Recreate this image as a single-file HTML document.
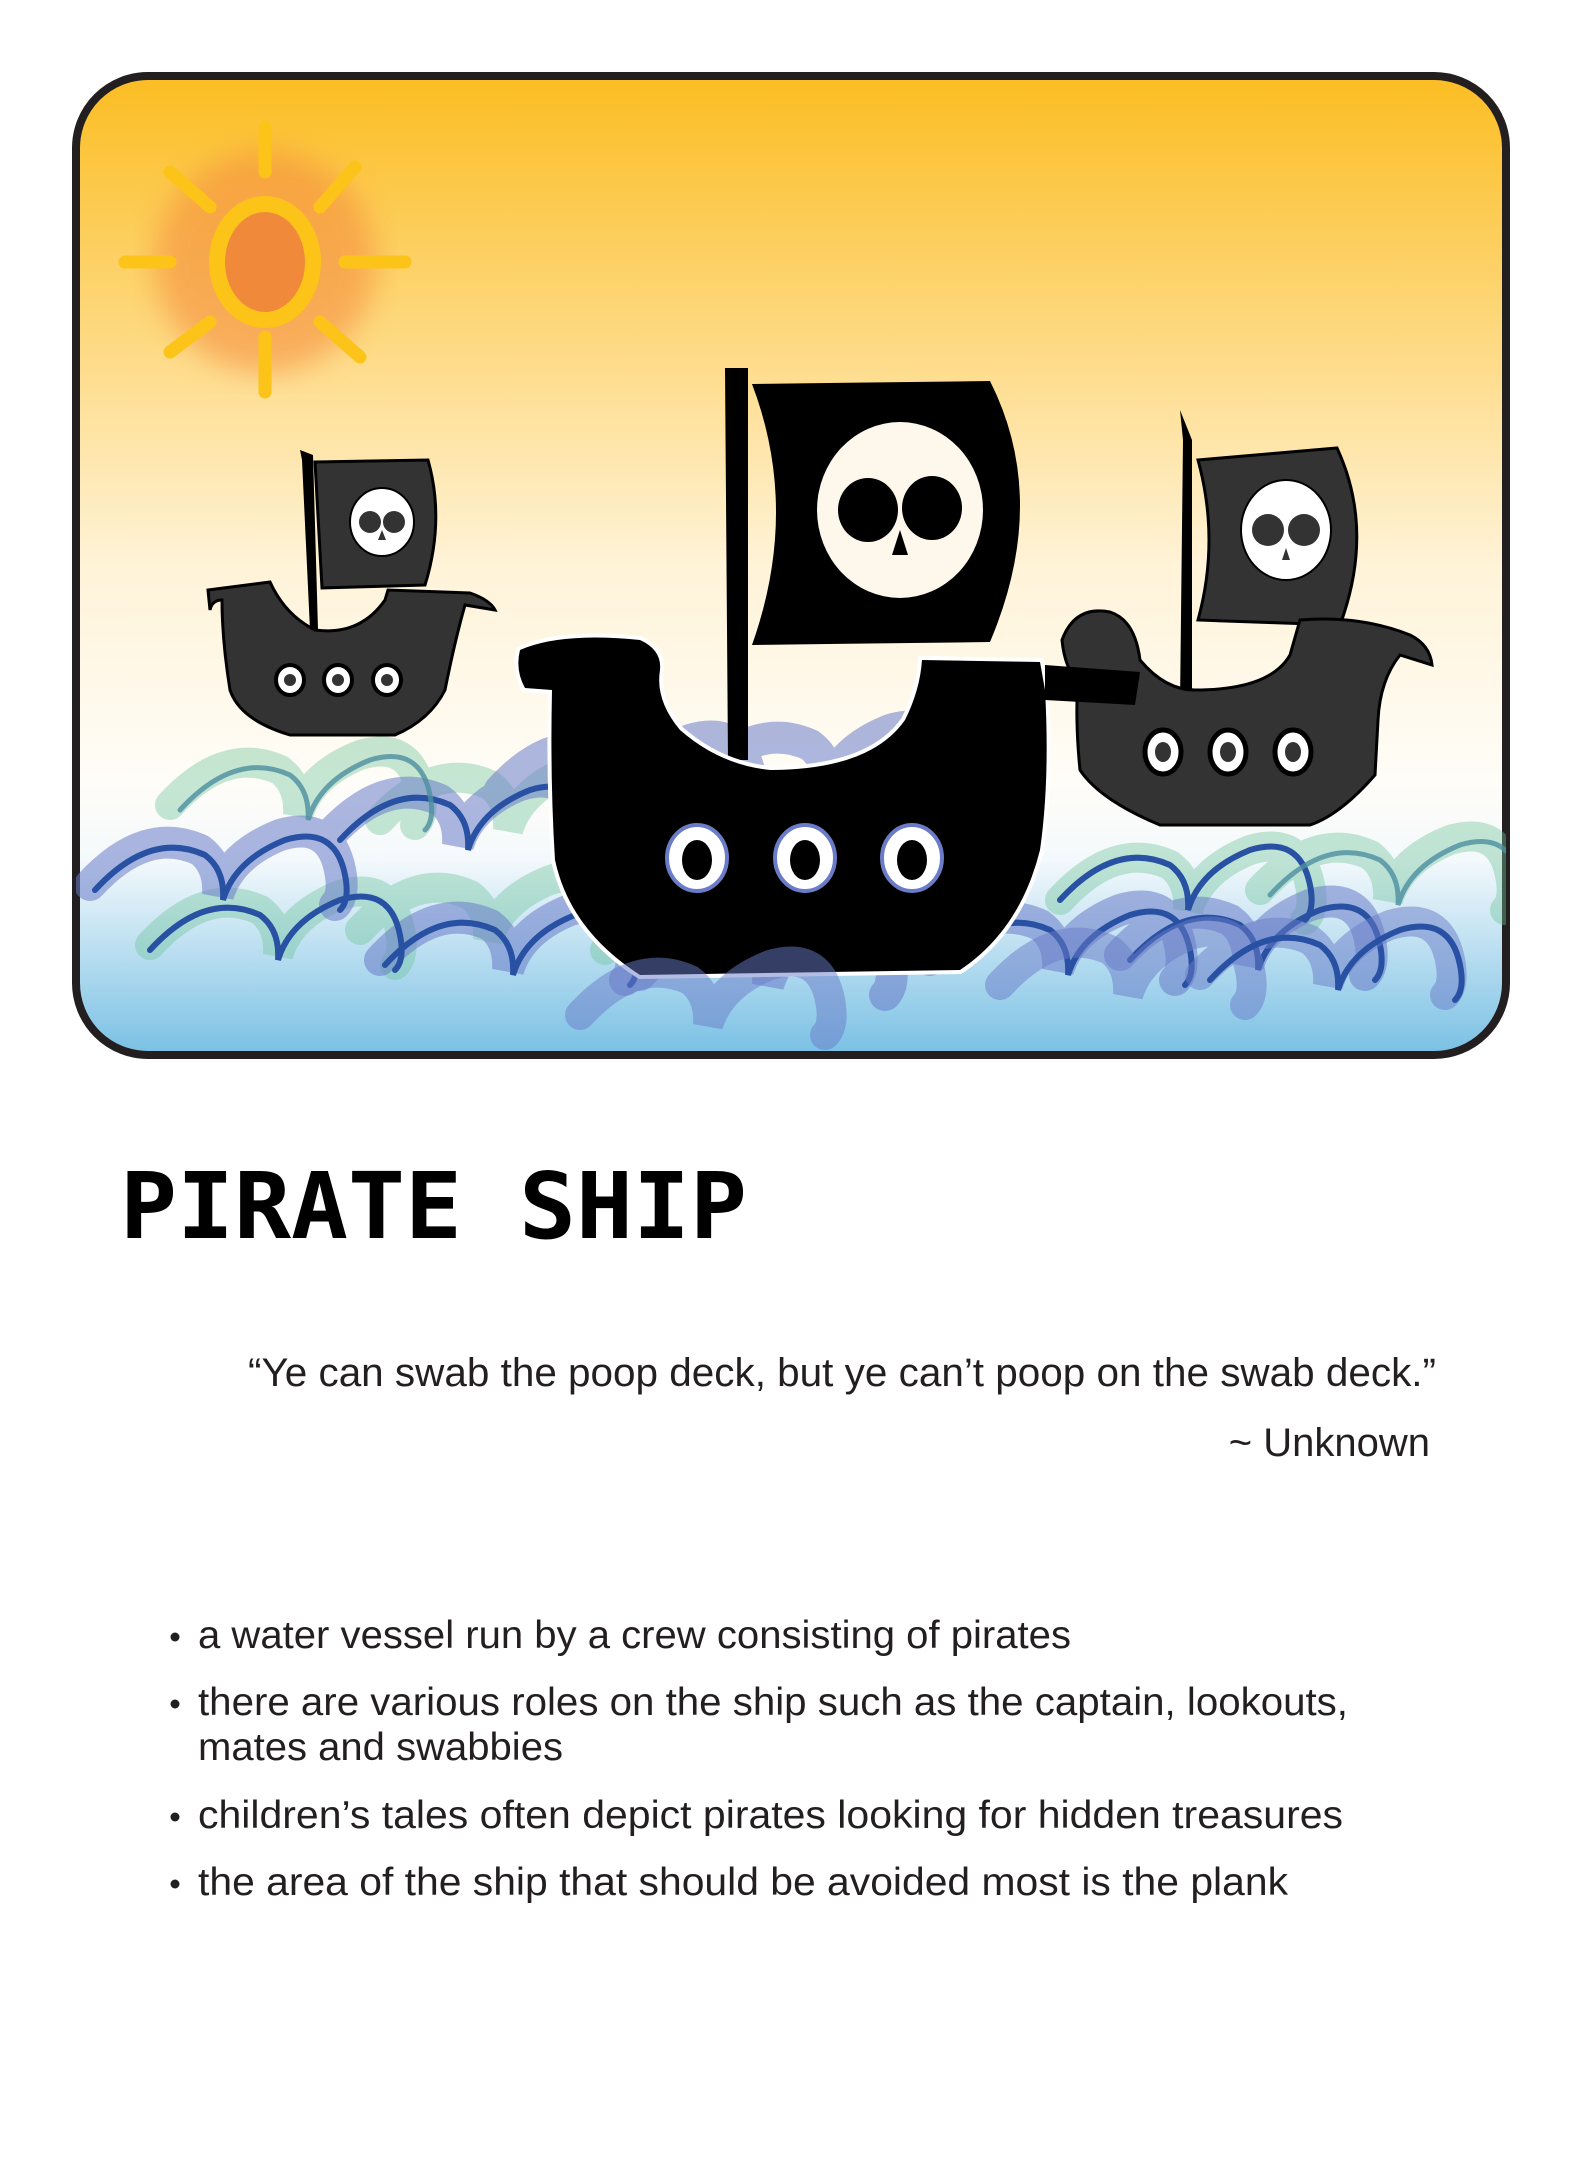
<!DOCTYPE html>
<html><head><meta charset="utf-8"><style>
html,body{margin:0;padding:0;background:#fff;}
svg{display:block}
</style></head><body>
<svg width="1575" height="2175" viewBox="0 0 1575 2175" xmlns="http://www.w3.org/2000/svg">
<defs>
<linearGradient id="sky" x1="0" y1="0" x2="0" y2="1">
<stop offset="0" stop-color="#fbbd22"/>
<stop offset="0.25" stop-color="#fdd77a"/>
<stop offset="0.5" stop-color="#fff3d8"/>
<stop offset="0.72" stop-color="#fffdf8"/>
<stop offset="0.8" stop-color="#f4f9fc"/>
<stop offset="1" stop-color="#79c0e4"/>
</linearGradient>
<clipPath id="cardclip"><rect x="76" y="76" width="1430" height="979" rx="72"/></clipPath>
<filter id="blur"><feGaussianBlur stdDeviation="14"/></filter>
<g id="wv">
<path d="M0 60 Q55 0 110 25 Q130 40 128 70 Q140 30 190 10 Q240 -5 250 45 Q255 70 245 80"/>
</g>
</defs>
<rect x="76" y="76" width="1430" height="979" rx="72" fill="url(#sky)" stroke="#231f20" stroke-width="8"/>
<g clip-path="url(#cardclip)">
<g transform="translate(265,262)">
<circle r="110" fill="#f5893a" opacity="0.55" filter="url(#blur)"/>
<g stroke="#fcc419" stroke-width="13" stroke-linecap="round" fill="none">
<line x1="0" y1="-90" x2="0" y2="-135"/><line x1="0" y1="75" x2="0" y2="130"/>
<line x1="-95" y1="0" x2="-140" y2="0"/><line x1="80" y1="0" x2="140" y2="0"/>
<line x1="-55" y1="-55" x2="-95" y2="-90"/><line x1="55" y1="-55" x2="90" y2="-95"/>
<line x1="-55" y1="60" x2="-95" y2="90"/><line x1="55" y1="60" x2="95" y2="95"/>
</g>
<ellipse rx="48" ry="58" fill="#f08a3a" stroke="#fcc419" stroke-width="16"/>
</g>
<g fill="none" stroke-linecap="round">
<g stroke="#6fc29a" stroke-width="30" opacity="0.4">
<use href="#wv" x="170" y="745"/><use href="#wv" x="380" y="760"/><use href="#wv" x="1060" y="840"/><use href="#wv" x="1260" y="830"/><use href="#wv" x="150" y="885"/><use href="#wv" x="360" y="870"/>
</g>
<g stroke="#6a7cc8" stroke-width="32" opacity="0.55">
<use href="#wv" x="90" y="825"/><use href="#wv" x="330" y="775"/><use href="#wv" x="500" y="730"/><use href="#wv" x="700" y="720"/><use href="#wv" x="380" y="900"/><use href="#wv" x="930" y="900"/><use href="#wv" x="1120" y="895"/><use href="#wv" x="640" y="915"/>
</g>
<g stroke="#2851a3" stroke-width="6">
<use href="#wv" x="95" y="830"/><use href="#wv" x="340" y="780"/><use href="#wv" x="150" y="890"/><use href="#wv" x="385" y="905"/><use href="#wv" x="1060" y="840"/><use href="#wv" x="1130" y="900"/><use href="#wv" x="940" y="905"/>
</g>
<g stroke="#4d8fa0" stroke-width="5" opacity="0.8">
<use href="#wv" x="180" y="750"/><use href="#wv" x="1270" y="835"/>
</g>
</g>
<g>
<path d="M315 462 L428 460 Q445 520 425 585 L322 588 Z" fill="#333" stroke="#000" stroke-width="3"/>
<ellipse cx="382" cy="522" rx="32" ry="34" fill="#fff" stroke="#000" stroke-width="2"/>
<circle cx="370" cy="522" r="11" fill="#333"/><circle cx="394" cy="522" r="11" fill="#333"/>
<path d="M378 540 L382 530 L386 540 Z" fill="#333"/>
<path d="M300 450 L302 460 L310 630 L318 630 L313 455 Z" fill="#000"/>
<path d="M208 590 L270 582 Q285 615 315 630 Q360 636 385 600 L388 590 L470 593 Q490 600 495 610 L465 605 Q455 640 445 690 Q430 720 395 735 L290 735 Q240 720 230 690 Q222 640 222 600 Q212 600 210 610 Z" fill="#333" stroke="#000" stroke-width="3"/>
<g fill="#fff" stroke="#000" stroke-width="4"><ellipse cx="290" cy="680" rx="14" ry="15"/><ellipse cx="338" cy="680" rx="14" ry="15"/><ellipse cx="387" cy="680" rx="14" ry="15"/></g>
<g fill="#333"><circle cx="290" cy="680" r="6"/><circle cx="338" cy="680" r="6"/><circle cx="387" cy="680" r="6"/></g>
</g>
<g>
<path d="M1198 460 L1337 448 Q1375 530 1340 625 L1198 620 Q1220 540 1198 460 Z" fill="#333" stroke="#000" stroke-width="3"/>
<ellipse cx="1286" cy="530" rx="45" ry="50" fill="#fff" stroke="#000" stroke-width="2"/>
<circle cx="1268" cy="530" r="16" fill="#333"/><circle cx="1304" cy="530" r="16" fill="#333"/>
<path d="M1282 560 L1286 548 L1290 560 Z" fill="#333"/>
<path d="M1180 410 L1183 440 L1180 705 L1192 705 L1192 440 Z" fill="#000"/>
<path d="M1062 640 Q1075 605 1110 612 Q1135 620 1140 660 Q1165 690 1195 690 Q1270 690 1290 655 L1300 620 Q1360 615 1410 635 Q1430 645 1432 665 L1400 655 Q1380 680 1378 720 L1375 775 Q1340 815 1310 825 L1160 825 Q1100 800 1080 770 Q1075 720 1078 680 Q1065 670 1062 640 Z" fill="#333" stroke="#000" stroke-width="3"/>
<g fill="#fff" stroke="#000" stroke-width="5"><ellipse cx="1163" cy="752" rx="18" ry="22"/><ellipse cx="1228" cy="752" rx="18" ry="22"/><ellipse cx="1293" cy="752" rx="18" ry="22"/></g>
<g fill="#333"><ellipse cx="1163" cy="752" rx="8" ry="10"/><ellipse cx="1228" cy="752" rx="8" ry="10"/><ellipse cx="1293" cy="752" rx="8" ry="10"/></g>
</g>
<g>
<path d="M752 384 L990 381 Q1050 500 990 642 L752 645 Q800 510 752 384 Z" fill="#000"/>
<ellipse cx="900" cy="510" rx="83" ry="88" fill="#fdf7ec"/>
<ellipse cx="868" cy="510" rx="30" ry="32" fill="#000"/><ellipse cx="932" cy="508" rx="30" ry="32" fill="#000"/>
<path d="M892 555 L900 530 L908 555 Z" fill="#000"/>
<path d="M725 368 L748 368 L748 760 L728 760 Z" fill="#000"/>
<path d="M520 650 Q560 632 640 640 Q662 650 660 670 Q655 700 680 730 Q720 765 770 770 Q870 770 905 720 Q920 690 922 660 L1040 662 L1045 690 Q1050 780 1040 850 Q1020 930 960 970 L640 975 Q570 930 555 860 Q550 780 552 690 L525 688 Q515 670 520 650 Z" fill="#000" stroke="#fff" stroke-width="8" paint-order="stroke"/>
<path d="M1045 665 L1140 672 L1135 705 L1045 700 Z" fill="#000"/>
<g fill="#fff" stroke="#6a7cc8" stroke-width="4"><ellipse cx="697" cy="858" rx="30" ry="33"/><ellipse cx="805" cy="858" rx="30" ry="33"/><ellipse cx="912" cy="858" rx="30" ry="33"/></g>
<g fill="#000"><ellipse cx="697" cy="860" rx="15" ry="20"/><ellipse cx="805" cy="860" rx="15" ry="20"/><ellipse cx="912" cy="860" rx="15" ry="20"/></g>
</g>
<g fill="none" stroke-linecap="round">
<g stroke="#6a7cc8" stroke-width="30" opacity="0.5"><use href="#wv" x="1000" y="925"/><use href="#wv" x="1200" y="915"/><use href="#wv" x="580" y="955"/></g>
<g stroke="#2851a3" stroke-width="6"><use href="#wv" x="1210" y="920"/></g>
</g>
</g>
<text x="120" y="1238" font-family="'DejaVu Sans Mono','Liberation Mono',monospace" font-weight="bold" font-size="92" textLength="627" lengthAdjust="spacingAndGlyphs" fill="#000">PIRATE SHIP</text>
<g font-family="'Liberation Sans',sans-serif" font-size="40" fill="#231f20">
<text x="248" y="1386" textLength="1188" lengthAdjust="spacingAndGlyphs">“Ye can swab the poop deck, but ye can’t poop on the swab deck.”</text>
<text x="1430" y="1456" text-anchor="end">~ Unknown</text>
</g>
<g font-family="'Liberation Sans',sans-serif" font-size="39" fill="#231f20">
<circle cx="175" cy="1637" r="4.5"/><circle cx="175" cy="1704" r="4.5"/><circle cx="175" cy="1817" r="4.5"/><circle cx="175" cy="1884" r="4.5"/>
<text x="198" y="1648" textLength="873" lengthAdjust="spacingAndGlyphs">a water vessel run by a crew consisting of pirates</text>
<text x="198" y="1715" textLength="1150" lengthAdjust="spacingAndGlyphs">there are various roles on the ship such as the captain, lookouts,</text>
<text x="198" y="1760" textLength="365" lengthAdjust="spacingAndGlyphs">mates and swabbies</text>
<text x="198" y="1828" textLength="1145" lengthAdjust="spacingAndGlyphs">children’s tales often depict pirates looking for hidden treasures</text>
<text x="198" y="1895" textLength="1090" lengthAdjust="spacingAndGlyphs">the area of the ship that should be avoided most is the plank</text>
</g>
</svg>
</body></html>
